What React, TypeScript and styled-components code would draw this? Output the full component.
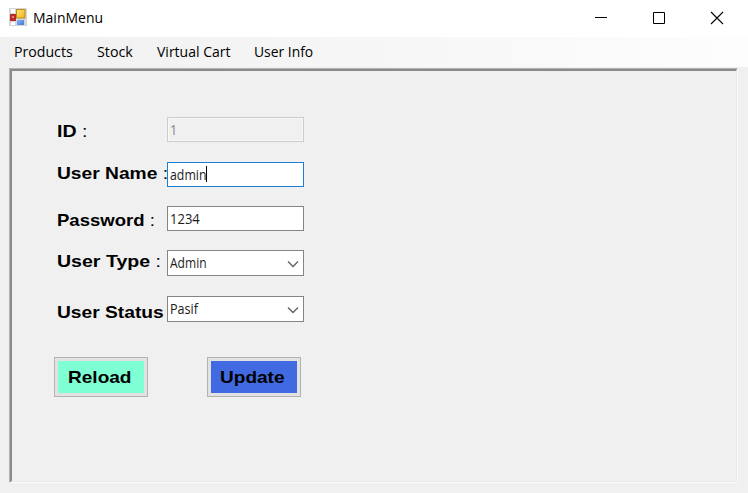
import React from "react";
import styled, { createGlobalStyle } from "styled-components";

const GlobalStyle = createGlobalStyle`
  * { box-sizing: border-box; }
  html, body { margin: 0; background: #f0f0f0; overflow: hidden; }
`;

const Window = styled.div`
  width: 748px;
  height: 493px;
  display: flex;
  flex-direction: column;
  background: #f0f0f0;
  color: #000;
  font-family: "Open Sans", "Noto Sans", sans-serif;
`;

const TitleBar = styled.header`
  height: 37px;
  flex: none;
  display: flex;
  align-items: flex-start;
  padding: 0 2px 0 9px;
  background: #fff;
`;

const AppIcon = styled.svg`
  width: 18px;
  height: 18px;
  margin-top: 8px;
  flex: none;
`;

const Stretch = styled.span<{ $x: number }>`
  display: inline-block;
  white-space: pre;
  transform: scaleX(${(p) => p.$x});
  transform-origin: 0 50%;
`;

const Title = styled.div`
  margin: 8px auto 0 6px;
  font: 14px/20px "Open Sans", sans-serif;
`;

const WindowButtons = styled.div`
  display: flex;
`;

const WindowButton = styled.div`
  width: 58px;
  height: 35px;
  display: flex;
  justify-content: center;

  svg { display: block; width: 14px; height: 14px; margin-top: 11px; }
`;

const MenuBar = styled.nav`
  height: 30px;
  flex: none;
  display: flex;
  padding-left: 14px;
  background: linear-gradient(90deg, #f0f0f0, #fdfdfd);
  font: 14px/30px "Open Sans", sans-serif;
`;

const MenuItem = styled.div<{ $w: number }>`
  width: ${(p) => p.$w}px;
`;

const Panel = styled.main`
  width: 729px;
  height: 415px;
  margin: 1px 0 0 9px;
  border: 1px solid;
  border-color: #b4b4b4 #fafafa #fafafa #b4b4b4;
`;

const PanelInner = styled.div`
  height: 100%;
  border: 2px solid;
  border-color: #8a8a8a #e9e9e9 #e9e9e9 #8a8a8a;
  border-right-width: 1px;
  border-bottom-width: 1px;
  padding: 46px 0 0 42px;
`;

const Row = styled.div<{ $gap: number }>`
  display: flex;
  align-items: flex-start;
  margin-left: 3px;
  margin-bottom: ${(p) => p.$gap}px;
`;

const Label = styled.label<{ $top: number }>`
  width: 110px;
  height: 20px;
  flex: none;
  margin-top: ${(p) => p.$top}px;
  margin-bottom: -10px;
  font: bold 17px/20px "Liberation Sans", sans-serif;
  white-space: pre;
`;

const Colon = styled.span`
  font-weight: normal;
`;

const Field = styled.div<{ $tall?: boolean; $kind?: "disabled" | "focused" }>`
  position: relative;
  width: 137px;
  height: ${(p) => (p.$tall ? 26 : 25)}px;
  flex: none;
  display: flex;
  justify-content: space-between;
  padding: 0 4px 0 2px;
  border: 1px solid
    ${(p) => (p.$kind === "disabled" ? "#cccccc" : p.$kind === "focused" ? "#1a7fd4" : "#858585")};
  background: ${(p) => (p.$kind === "disabled" ? "#f0f0f0" : "#fff")};
  box-shadow: ${(p) => (p.$kind === "disabled" ? "inset 0 0 0 1px #f8f8f8" : "none")};
  color: ${(p) => (p.$kind === "disabled" ? "#858585" : "#1c1c1c")};
  font: 14px/23px "Open Sans", sans-serif;
`;

const Value = styled.span`
  display: flex;
`;

const Caret = styled.i`
  width: 1px;
  height: 16px;
  margin: 3px 0 0 -5px;
  background: #000;
`;

const Chevron = styled.svg`
  width: 12px;
  height: 8px;
  margin-top: 9px;
`;

const Actions = styled.div`
  display: flex;
  gap: 59px;
`;

const ActionButton = styled.button<{ $color: string; $indent: number }>`
  width: 94px;
  height: 40px;
  padding: 1px 0 0 ${(p) => p.$indent}px;
  border: 1px solid #b2b2b2;
  box-shadow: inset 0 0 0 3px #e2e2e2;
  background: ${(p) => p.$color};
  color: #000;
  text-align: left;
  font: bold 17px/38px "Liberation Sans", sans-serif;
`;

const Arrow = () => (
  <Chevron viewBox="0 0 12 8">
    <path d="M1 1.5 6 6.5 11 1.5" fill="none" stroke="#606060" strokeWidth="1.3" />
  </Chevron>
);

const menus = [
  { text: "Products", w: 83, x: 1.01 },
  { text: "Stock", w: 60, x: 1.02 },
  { text: "Virtual Cart", w: 97, x: 1 },
  { text: "User Info", w: 80, x: 0.99 },
];

export default function App() {
  return (
    <Window>
      <GlobalStyle />
      <TitleBar>
        <AppIcon viewBox="0 0 18 18">
          <defs>
            <linearGradient id="gold" x1="0" y1="0" x2="1" y2="1">
              <stop offset="0" stopColor="#ffe680" />
              <stop offset="1" stopColor="#f0b010" />
            </linearGradient>
            <linearGradient id="blue" x1="0" y1="0" x2="1" y2="1">
              <stop offset="0" stopColor="#82b4f7" />
              <stop offset="1" stopColor="#4078d8" />
            </linearGradient>
          </defs>
          <path d="M0 0h18v18H0z" fill="#d6d6d6" />
          <path d="M2 1h4v4H2zM2 14h4v3H2z" fill="#fff" />
          <path d="M1 6h6v7H1z" fill="#b82c28" />
          <path d="M3 8h2v2H3z" fill="#e88078" />
          <path d="M7.5 1.5h8.5v8.5H7.5z" fill="url(#gold)" stroke="#b98a1c" />
          <path d="M8 12h7v5H8z" fill="url(#blue)" />
        </AppIcon>
        <Title>MainMenu</Title>
        <WindowButtons>
          <WindowButton>
            <svg viewBox="0 0 14 14"><path d="M1 6.5h12" stroke="#000" /></svg>
          </WindowButton>
          <WindowButton>
            <svg viewBox="0 0 14 14"><path d="M1.5 1.5h11v11h-11z" fill="none" stroke="#000" /></svg>
          </WindowButton>
          <WindowButton>
            <svg viewBox="0 0 14 14"><path d="M1 1l12 12M13 1L1 13" stroke="#000" strokeWidth="1.1" /></svg>
          </WindowButton>
        </WindowButtons>
      </TitleBar>
      <MenuBar>
        {menus.map((m) => (
          <MenuItem key={m.text} $w={m.w}><Stretch $x={m.x}>{m.text}</Stretch></MenuItem>
        ))}
      </MenuBar>
      <Panel>
        <PanelInner>
          <Row $gap={20}>
            <Label $top={5}><Stretch $x={1.15}>ID <Colon>:</Colon></Stretch></Label>
            <Field $kind="disabled"><Stretch $x={0.9}>1</Stretch></Field>
          </Row>
          <Row $gap={19}>
            <Label $top={2}><Stretch $x={1.13}>User Name <Colon>:</Colon></Stretch></Label>
            <Field $kind="focused">
              <Value><Stretch $x={0.88}>admin</Stretch><Caret /></Value>
            </Field>
          </Row>
          <Row $gap={19}>
            <Label $top={5}><Stretch $x={1.09}>Password <Colon>:</Colon></Stretch></Label>
            <Field><Stretch $x={0.93}>1234</Stretch></Field>
          </Row>
          <Row $gap={20}>
            <Label $top={2}><Stretch $x={1.15}>User Type <Colon>:</Colon></Stretch></Label>
            <Field $tall><Stretch $x={0.86}>Admin</Stretch><Arrow /></Field>
          </Row>
          <Row $gap={35}>
            <Label $top={7}><Stretch $x={1.13}>User Status</Stretch></Label>
            <Field $tall><Stretch $x={0.9}>Pasif</Stretch><Arrow /></Field>
          </Row>
          <Actions>
            <ActionButton $color="#7fffd4" $indent={13}><Stretch $x={1.12}>Reload</Stretch></ActionButton>
            <ActionButton $color="#4169e1" $indent={12}><Stretch $x={1.12}>Update</Stretch></ActionButton>
          </Actions>
        </PanelInner>
      </Panel>
    </Window>
  );
}
